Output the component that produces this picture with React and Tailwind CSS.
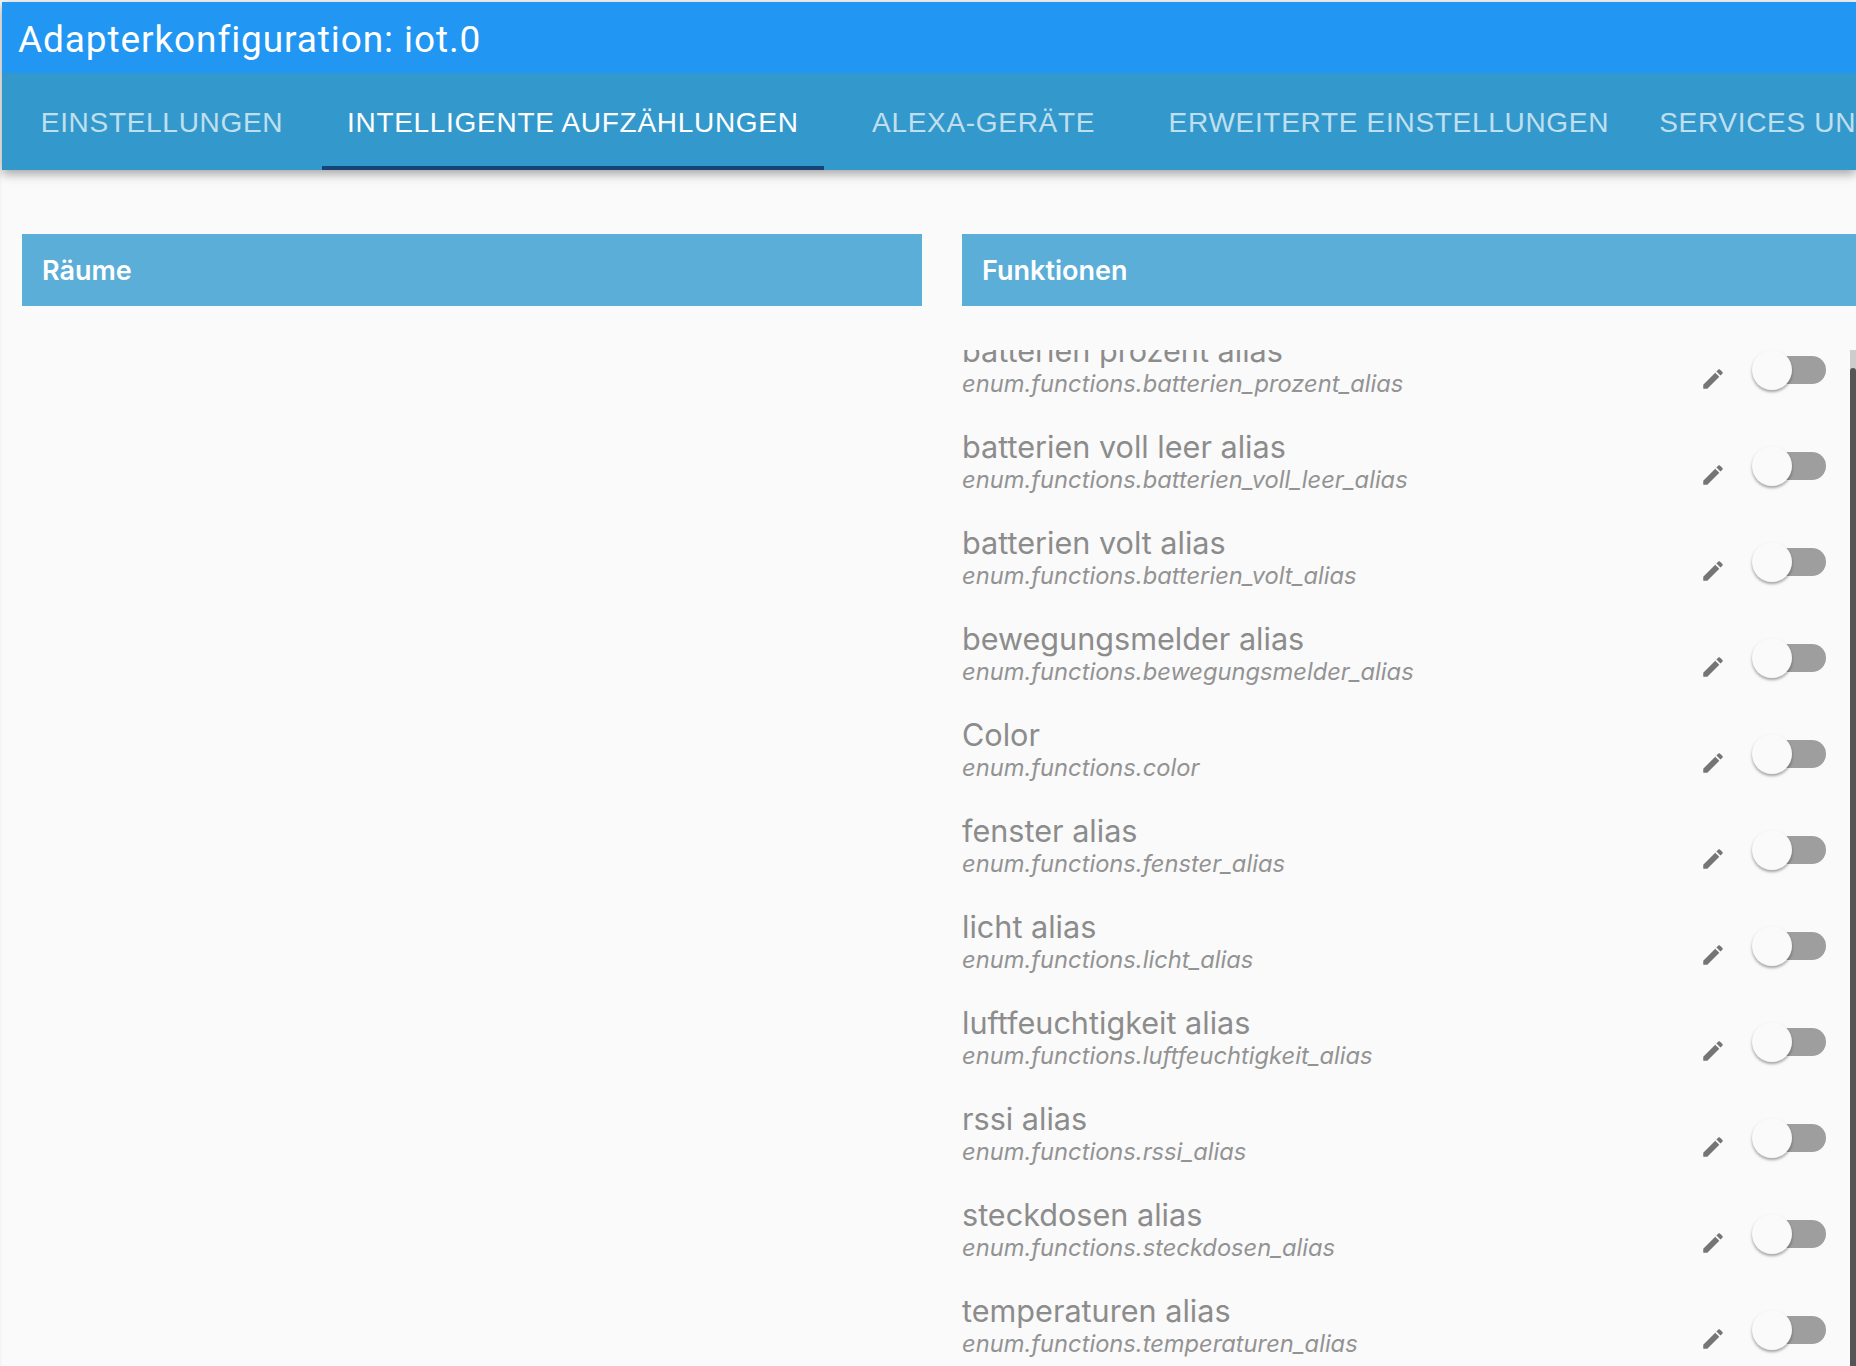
const rows = [
  ["batterien prozent alias", "enum.functions.batterien_prozent_alias"],
  ["batterien voll leer alias", "enum.functions.batterien_voll_leer_alias"],
  ["batterien volt alias", "enum.functions.batterien_volt_alias"],
  ["bewegungsmelder alias", "enum.functions.bewegungsmelder_alias"],
  ["Color", "enum.functions.color"],
  ["fenster alias", "enum.functions.fenster_alias"],
  ["licht alias", "enum.functions.licht_alias"],
  ["luftfeuchtigkeit alias", "enum.functions.luftfeuchtigkeit_alias"],
  ["rssi alias", "enum.functions.rssi_alias"],
  ["steckdosen alias", "enum.functions.steckdosen_alias"],
  ["temperaturen alias", "enum.functions.temperaturen_alias"],
];

const tabs = ["Einstellungen", "Intelligente Aufzählungen", "Alexa-Geräte", "Erweiterte Einstellungen", "Services und IFTTT"];

function Pencil() {
  return (
    <svg viewBox="0 0 24 24" className="w-[26px] h-[26px] fill-[#757575]">
      <path d="M3 17.25V21h3.75L17.81 9.94l-3.75-3.75L3 17.25zM20.71 7.04c.39-.39.39-1.02 0-1.41l-2.34-2.34a.9959.9959 0 0 0-1.41 0l-1.83 1.83 3.75 3.75 1.83-1.83z" />
    </svg>
  );
}

function Toggle() {
  return (
    <div className="relative w-[74px] h-10 shrink-0">
      <div className="absolute right-0 top-[6px] w-[68px] h-7 rounded-[14px] bg-[#9e9e9e]" />
      <div className="absolute left-0 top-0 w-10 h-10 rounded-full bg-[#fafafa] shadow-[0_2px_3px_rgba(0,0,0,0.35)]" />
    </div>
  );
}

export default function App() {
  return (
    <div className="w-[1856px] h-[1366px] overflow-hidden bg-[#f5f5f5] pt-[2px] pl-[2px] font-['Roboto',sans-serif]">
      <div className="h-full flex flex-col bg-[#fafafa]">
        <header className="relative z-10 shadow-[0_4px_10px_rgba(0,0,0,0.35)]">
          <div className="h-[71px] bg-[#2196f3] flex items-center pl-4 pt-[5px] text-white text-[37px] tracking-[0.9px] overflow-hidden">
            Adapterkonfiguration: iot.0
          </div>
          <nav className="h-[97px] bg-[#3399cc] flex overflow-hidden font-['Liberation_Sans',sans-serif]">
            {tabs.map((t, i) => (
              <div
                key={t}
                className={
                  i === 1
                    ? "relative shrink-0 min-w-[320px] px-[25px] pt-[2px] flex items-center justify-center uppercase whitespace-nowrap text-[28px] tracking-[0.7px] text-white"
                    : "relative shrink-0 min-w-[320px] px-[25px] pt-[2px] flex items-center justify-center uppercase whitespace-nowrap text-[28px] tracking-[0.7px] text-white/70"
                }
              >
                {t}
                {i === 1 && <span className="absolute left-0 right-0 bottom-0 h-1 bg-[#164477]" />}
              </div>
            ))}
          </nav>
        </header>
        <main className="flex-1 min-h-0 flex gap-10 pl-5 pt-16">
          <section className="w-[900px] shrink-0">
            <h2 className="h-[72px] bg-[#5baed8] flex items-center px-5 pt-[2px] text-white text-[27px] font-semibold font-['Inter',sans-serif]">Räume</h2>
          </section>
          <section className="flex-1 min-w-0 flex flex-col">
            <h2 className="h-[72px] shrink-0 bg-[#5baed8] flex items-center px-5 pt-[2px] text-white text-[27px] font-semibold font-['Inter',sans-serif]">Funktionen</h2>
            <div className="relative mt-[44px] flex-1 min-h-0 overflow-hidden">
              <ul className="-mt-[31px]">
                {rows.map(([name, id]) => (
                  <li key={id} className="h-24 flex items-center pr-[30px]">
                    <div className="flex-1 min-w-0 pb-[5px] font-['Inter',sans-serif]">
                      <div className="text-[30.6px] leading-[38px] text-[#8c8c8c]">{name}</div>
                      <div className="mt-[1px] text-[23.7px] leading-[26px] italic text-[#939393]">{id}</div>
                    </div>
                    <div className="flex items-center mt-[6px]">
                      <span className="mr-[26px] mt-[17px]"><Pencil /></span>
                      <Toggle />
                    </div>
                  </li>
                ))}
              </ul>
              <div className="absolute right-0 top-0 bottom-0 w-[6px] bg-[#cccccc]">
                <div className="absolute left-0 right-0 top-[18px] bottom-0 rounded-t-[3px] bg-[#555555]" />
              </div>
            </div>
          </section>
        </main>
      </div>
    </div>
  );
}
